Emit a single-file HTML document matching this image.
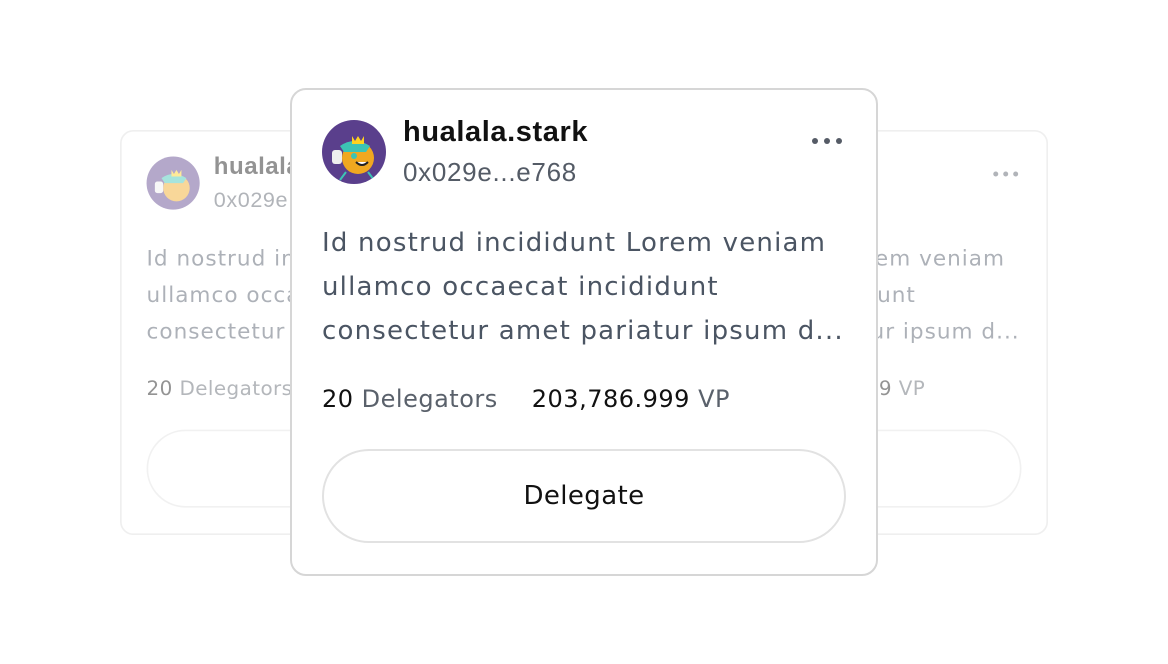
<!DOCTYPE html>
<html><head><style>
body{margin:0;width:1168px;height:664px;background:#fff;font-family:"Liberation Sans",sans-serif;position:relative;overflow:hidden}
.card{position:absolute;width:588px;height:488px;box-sizing:border-box;border:2px solid #d6d6d6;border-radius:16px;background:#fff}
.av{position:absolute;left:30px;top:30px;width:64px;height:64px;border-radius:50%;background:#5a3f8c;overflow:hidden}
.name{position:absolute;left:111px;top:26px;font-size:29px;font-weight:bold;color:#111;letter-spacing:0.6px}
.addr{position:absolute;left:111px;top:67px;font-size:26px;color:#545b66;letter-spacing:0.7px}
.dots{position:absolute;right:34px;top:48px;display:flex;gap:6px}
.dots i{width:6px;height:6px;border-radius:50%;background:#555b66;display:block}
.txt{position:absolute;left:30px;top:131px;width:530px;font-family:"DejaVu Sans",sans-serif;font-size:26px;letter-spacing:1.2px;line-height:44px;color:#4b5563;white-space:nowrap}
.stats{position:absolute;left:30px;top:295px;font-family:"DejaVu Sans",sans-serif;font-size:24px;letter-spacing:0.5px;color:#111;white-space:nowrap}
.stats span{color:#5a616b}
.stats b{font-weight:normal;margin-left:34px}
.btn{position:absolute;left:30px;top:359px;width:524px;height:94px;box-sizing:border-box;border:2px solid #e2e2e2;border-radius:47px;display:flex;align-items:center;justify-content:center;font-family:"DejaVu Sans",sans-serif;font-size:26px;letter-spacing:0.4px;color:#111}
</style></head><body>
<div style="position:absolute;left:120px;top:130px;width:488px;height:405px;opacity:.45;overflow:hidden">
<div class="card" style="transform-origin:0 0;transform:scale(0.83);left:0;top:0;border-color:#ddd">
<div class="av"><svg width="64" height="64"><circle cx="36" cy="38" r="16" fill="#f0a820"/><path d="M18 26q14-10 30 0l-4 6h-22z" fill="#3cc4b4"/><path d="M30 16l3 5 3-5 3 5 3-5v8h-12z" fill="#ffd21e"/><rect x="10" y="30" width="10" height="14" rx="3" fill="#eee"/></svg></div>
<div class="name">hualala.stark</div><div class="addr">0x029e...e768</div>
<div class="txt">Id nostrud incididunt Lorem veniam<br>ullamco occaecat incididunt<br>consectetur amet pariatur ipsum d...</div>
<div class="stats">20 <span>Delegators</span></div>
<div class="btn"></div></div></div>
<div style="position:absolute;left:560px;top:130px;width:488px;height:405px;opacity:.45;overflow:hidden">
<div class="card" style="transform-origin:0 0;transform:scale(0.83);left:0;top:0;border-color:#ddd">
<div class="dots"><i></i><i></i><i></i></div>
<div class="txt">Id nostrud incididunt Lorem veniam<br>ullamco occaecat incididunt<br>consectetur amet pariatur ipsum d...</div>
<div class="stats">20 <span>Delegators</span><b>203,786.999</b> <span>VP</span></div>
<div class="btn"></div></div></div>
<div class="card" style="left:290px;top:88px">
<div class="av"><svg width="64" height="64"><circle cx="36" cy="38" r="16" fill="#f0a820"/><path d="M18 26q14-10 30 0l-4 6h-22z" fill="#3cc4b4"/><path d="M30 16l3 5 3-5 3 5 3-5v8h-12z" fill="#ffd21e"/><rect x="10" y="30" width="10" height="14" rx="3" fill="#eee"/><path d="M34 42q6 6 12 0" stroke="#222" stroke-width="2" fill="#fff"/><circle cx="32" cy="36" r="3" fill="#3cc4b4"/><path d="M24 52l-6 8M46 52l6 8" stroke="#3cc4b4" stroke-width="2"/></svg></div>
<div class="name">hualala.stark</div>
<div class="addr">0x029e...e768</div>
<div class="dots"><i></i><i></i><i></i></div>
<div class="txt">Id nostrud incididunt Lorem veniam<br>ullamco occaecat incididunt<br>consectetur amet pariatur ipsum d...</div>
<div class="stats">20 <span>Delegators</span><b>203,786.999</b> <span>VP</span></div>
<div class="btn">Delegate</div>
</div>
</body></html>
